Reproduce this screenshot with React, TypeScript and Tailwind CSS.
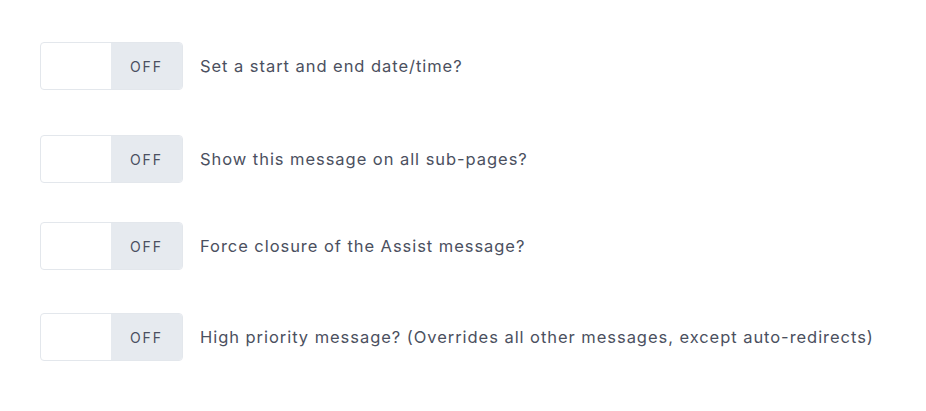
const rows = [
  { label: 'Set a start and end date/time?', mt: 'mt-[42px]' },
  { label: 'Show this message on all sub-pages?', mt: 'mt-[45px]' },
  { label: 'Force closure of the Assist message?', mt: 'mt-[39px]' },
  { label: 'High priority message? (Overrides all other messages, except auto-redirects)', mt: 'mt-[43px]' },
];

function Toggle() {
  return (
    <div className="flex h-[48px] w-[143px] shrink-0 overflow-hidden rounded-[4px] border border-[#e3e7ec] bg-white">
      <div className="w-[70px]" />
      <div className="flex flex-1 items-center justify-center bg-[#e6eaef] text-[14px] tracking-[2px] text-[#4b5060]">
        OFF
      </div>
    </div>
  );
}

export default function App() {
  return (
    <div className="flex h-[411px] flex-col overflow-hidden bg-white pl-[40px] font-['Inter'] antialiased">
      {rows.map((r, i) => (
        <div key={i} className={`flex items-center ${r.mt}`}>
          <Toggle />
          <span className="ml-[17px] text-[16.5px] tracking-[0.95px] text-[#4b5060]">{r.label}</span>
        </div>
      ))}
    </div>
  );
}
